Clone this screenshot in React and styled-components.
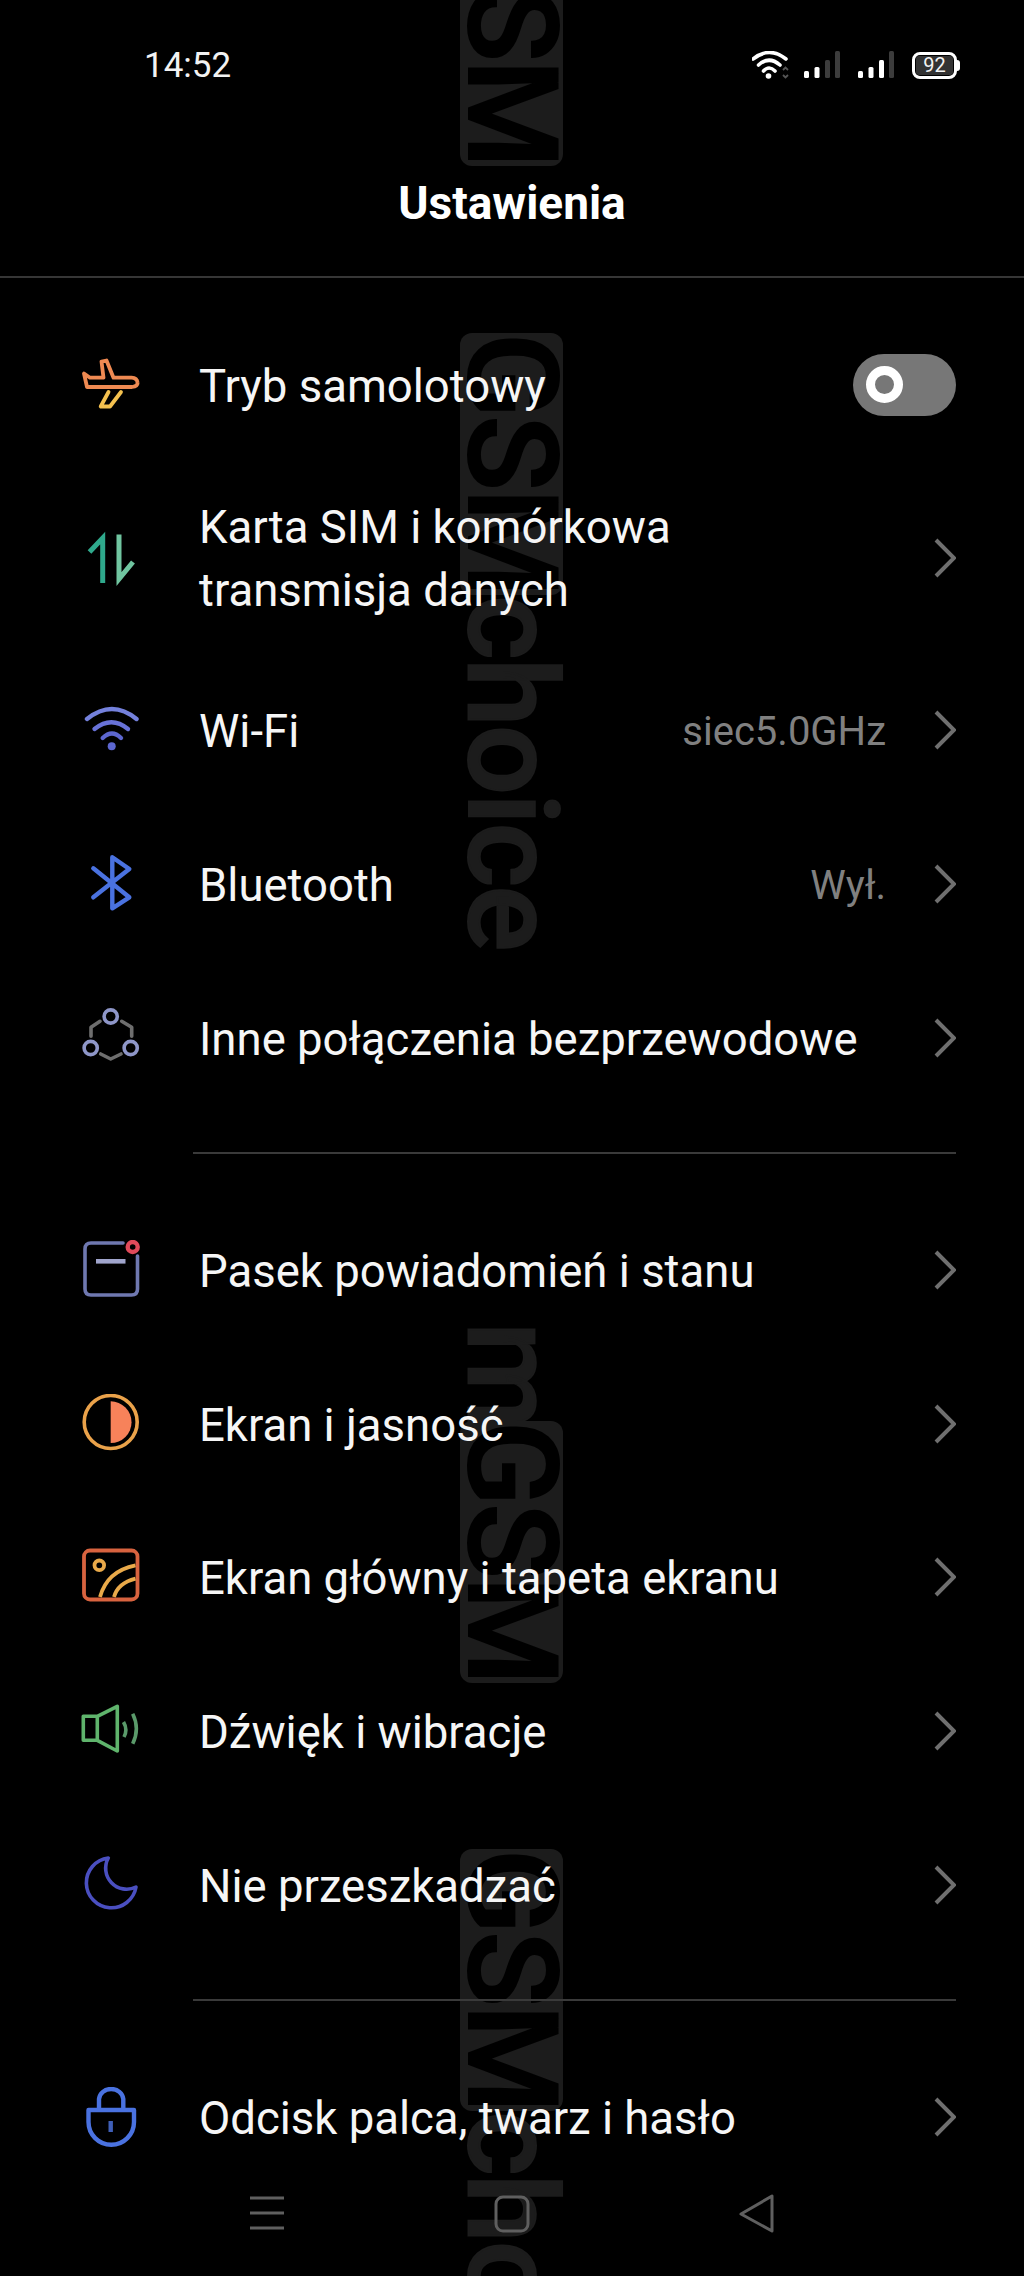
import React from "react";
import styled, { createGlobalStyle } from "styled-components";

const GlobalStyle = createGlobalStyle`
  html, body { margin: 0; padding: 0; background: #000; }
  * { box-sizing: border-box; }
`;

const Page = styled.div`
  position: relative;
  width: 1024px;
  height: 2276px;
  overflow: hidden;
  background: #000;
  color: #f6f6f6;
  font-family: Roboto, "Liberation Sans", sans-serif;
`;

/* watermark sits under everything */
const WatermarkGroup = styled.div`
  position: absolute;
  left: 460px;
  top: ${(p) => p.$top}px;
  width: 103px;
  display: flex;
  flex-direction: row;
  align-items: stretch;
  font-size: 124px;
  font-weight: 500;
  letter-spacing: -2px;
  line-height: 103px;
  writing-mode: vertical-rl;
  white-space: nowrap;
`;

const WatermarkPlate = styled.div`
  width: 103px;
  height: 262px;
  display: flex;
  justify-content: center;
  border-radius: 12px;
  background: #1c1c1c;
  color: #000;
  -webkit-text-stroke: 2px #000;
`;

const WatermarkWord = styled.div`
  width: 103px;
  height: ${(p) => (p.$length ? `${p.$length}px` : "auto")};
  color: #1c1c1c;
  -webkit-text-stroke: 2px #1c1c1c;
`;

const Content = styled.div`
  position: relative;
`;

const StatusBar = styled.div`
  height: 130px;
  padding: 0 65px 0 144px;
  display: flex;
  align-items: center;
  justify-content: space-between;
`;

const Time = styled.span`
  font-size: 35px;
  color: #f2f2f2;
`;

const StatusIcons = styled.div`
  display: flex;
  align-items: center;
  gap: 18px;
`;

const StatusWifi = styled.svg`
  width: 38px;
  height: 28px;
  margin-right: -4px;
`;

const StatusSignal = styled.svg`
  width: 36px;
  height: 28px;
`;

const Battery = styled.div`
  position: relative;
  width: 45px;
  height: 27px;
  margin-right: 2px;
  padding: 1px;
  border: 3px solid #fff;
  border-radius: 8px;
  &::after {
    content: "";
    position: absolute;
    right: -6px;
    top: 5px;
    width: 3px;
    height: 11px;
    border-radius: 0 3px 3px 0;
    background: #fff;
  }
`;

const BatteryLevel = styled.div`
  height: 100%;
  border-radius: 3px;
  background: #333;
  color: #f4f4f4;
  font-size: 20px;
  line-height: 19px;
  text-align: center;
`;

const Header = styled.h1`
  margin: 0;
  height: 148px;
  display: flex;
  align-items: center;
  justify-content: center;
  border-bottom: 2px solid #363636;
  font-size: 46px;
  font-weight: 700;
  color: #fff;
`;

const List = styled.div`
  padding-top: 30px;
`;

const Row = styled.div`
  min-height: 153.6px;
  padding: 31.5px 68px 31.5px 80px;
  display: flex;
  align-items: center;
`;

const IconBox = styled.svg`
  flex: none;
  width: 60px;
  height: 60px;
  margin-right: 59px;
  fill: none;
  stroke-linecap: round;
  stroke-linejoin: round;
`;

const Label = styled.div`
  flex: 1;
  padding-top: 3px;
  font-size: 45.5px;
  line-height: 63px;
  white-space: pre-line;
  color: #f6f6f6;
`;

const Value = styled.span`
  margin-right: 48px;
  padding-top: 3px;
  font-size: 40px;
  color: #808080;
`;

const Chevron = styled.svg`
  flex: none;
  width: 22px;
  height: 40px;
  fill: none;
  stroke: #6f6f6f;
  stroke-width: 4;
`;

const Toggle = styled.div`
  width: 103px;
  height: 62px;
  padding: 12px 0 0 13px;
  border-radius: 31px;
  background: #777;
`;

const ToggleKnob = styled.div`
  width: 37px;
  height: 37px;
  border: 9px solid #fff;
  border-radius: 50%;
`;

const SectionLine = styled.div`
  height: 2px;
  margin: 38px 68px 39px 193px;
  background: #3a3a3a;
`;

const NavBar = styled.div`
  height: 79px;
  padding: 0 145px;
  display: grid;
  grid-template-columns: repeat(3, 1fr);
  justify-items: center;
`;

const NavIcon = styled.svg`
  width: 40px;
  height: 40px;
  fill: none;
  stroke: #5f5f5f;
  stroke-width: 3;
  stroke-linecap: round;
  stroke-linejoin: round;
`;

const PlaneIcon = () => (
  <IconBox viewBox="0 0 60 60" strokeWidth="3.8">
    <path stroke="#ef8a52" d="M4 18.5 L7 32 H52 Q58 31 57.5 27.5 Q57 23 51.5 22.7 H33.5 L26.5 5.5 L21.5 6.5 L23.5 22.7 H10 Z" />
    <path stroke="#f4c14f" d="M28.5 37 L20.7 51.5 H30 L41 37" />
  </IconBox>
);

const DataIcon = () => (
  <IconBox viewBox="0 0 60 60" strokeWidth="5" style={{ strokeLinecap: "butt", strokeLinejoin: "miter" }}>
    <path stroke="#2fa98c" d="M22.7 55 V10 L9.5 24" />
    <path stroke="#70c5a0" d="M39 6.5 V51 L53 34" />
  </IconBox>
);

const WifiIcon = () => (
  <IconBox viewBox="0 0 60 60" strokeWidth="4.4">
    <path stroke="#7481dc" d="M7 19 Q32 -1 56.5 19" />
    <path stroke="#6872d8" d="M14.5 29 Q31.5 15.5 48 29" />
    <path stroke="#5d67d0" d="M22.7 38 Q32 29 41 38" />
    <circle cx="31.7" cy="46.3" r="4" fill="#5d67d0" stroke="none" />
  </IconBox>
);

const BluetoothIcon = () => (
  <IconBox viewBox="0 0 60 60" strokeWidth="4.4" stroke="#4a72e0">
    <path d="M13.3 14.3 L49.3 43.3 L32.3 54.3 V3.3 L49.3 15 L13.3 43.3" />
  </IconBox>
);

const WirelessIcon = () => (
  <IconBox viewBox="0 0 60 60" strokeWidth="3.6">
    <path stroke="#6e6e6e" d="M20 13.3 L11 19.3 V28.3 M41.7 13.3 L51.7 19.3 V28.3 M20.7 46 L30.7 51 L41 46" />
    <g stroke="#8e96c8">
      <circle cx="30.7" cy="8.5" r="6.6" />
      <circle cx="10.7" cy="40" r="6.6" />
      <circle cx="50.7" cy="40" r="6.6" />
    </g>
  </IconBox>
);

const NoticeIcon = () => (
  <IconBox viewBox="0 0 60 60" strokeWidth="3.6">
    <path stroke="#6f78b0" d="M43 3 H11 Q5 3 5 9 V49 Q5 55 11 55 H51.5 Q57.5 55 57.5 49 V16" />
    <path stroke="#a0a5cc" strokeWidth="4.6" strokeLinecap="butt" d="M16 21.3 H45.5" />
    <circle cx="52.7" cy="7" r="5" stroke="#e04a5a" strokeWidth="4.4" />
  </IconBox>
);

const DisplayIcon = () => (
  <IconBox viewBox="0 0 60 60" strokeWidth="3.6">
    <circle cx="30.7" cy="28" r="26.5" stroke="#eaa24a" />
    <path fill="#f7825a" d="M30.7 7.3 A20.7 20.7 0 0 1 30.7 49 Z" />
  </IconBox>
);

const WallpaperIcon = () => (
  <IconBox viewBox="0 0 60 60" strokeWidth="3.8">
    <rect x="4" y="3.5" width="53.5" height="49" rx="6" stroke="#d8633f" />
    <circle cx="19.3" cy="18.3" r="4.8" stroke="#eaaa4a" />
    <path stroke="#eaaa4a" strokeLinecap="butt" d="M20 50 Q27 24 55.5 18.3 M34 50 Q38 36 55.5 31.7" />
  </IconBox>
);

const SoundIcon = () => (
  <IconBox viewBox="0 0 60 60" strokeWidth="3.6">
    <path stroke="#5fb46c" d="M3.3 15.3 H17.3 L37.3 5.3 V50 L17.3 39.3 H3.3 Z M17.3 15.3 V39.3" />
    <path stroke="#5a9a6a" strokeLinecap="butt" d="M43.5 21 Q48 28.5 44 36 M52.7 12.7 Q60 27.7 52.7 42.7" />
  </IconBox>
);

const MoonIcon = () => (
  <IconBox viewBox="0 0 60 60" strokeWidth="3.6" stroke="#4a4fc0">
    <path d="M28.3 3 A25 25 0 1 0 56 32 A21 21 0 0 1 28.3 3 Z" />
  </IconBox>
);

const LockIcon = () => (
  <IconBox viewBox="0 0 60 60" strokeWidth="4.4" stroke="#4a72e0">
    <path d="M19 22 V12 A12.2 11 0 0 1 43.3 12 V22" />
    <path d="M8.5 23 H54 V35 A22.7 22.7 0 0 1 8.5 35 Z" />
    <path stroke="#3f5fb8" strokeLinecap="butt" d="M30.7 34 V45" />
  </IconBox>
);

const firstRows = [
  { id: "plane", icon: PlaneIcon, label: "Tryb samolotowy", toggle: true },
  { id: "sim", icon: DataIcon, label: "Karta SIM i komórkowa\ntransmisja danych" },
  { id: "wifi", icon: WifiIcon, label: "Wi-Fi", value: "siec5.0GHz" },
  { id: "bt", icon: BluetoothIcon, label: "Bluetooth", value: "Wył." },
  { id: "other", icon: WirelessIcon, label: "Inne połączenia bezprzewodowe" },
];

const secondRows = [
  { id: "notice", icon: NoticeIcon, label: "Pasek powiadomień i stanu" },
  { id: "display", icon: DisplayIcon, label: "Ekran i jasność" },
  { id: "home", icon: WallpaperIcon, label: "Ekran główny i tapeta ekranu" },
  { id: "sound", icon: SoundIcon, label: "Dźwięk i wibracje" },
  { id: "dnd", icon: MoonIcon, label: "Nie przeszkadzać" },
];

const thirdRows = [
  { id: "lock", icon: LockIcon, label: "Odcisk palca, twarz i hasło" },
];

function SettingsRow({ item }) {
  const Icon = item.icon;
  return (
    <Row>
      <Icon />
      <Label>{item.label}</Label>
      {item.value && <Value>{item.value}</Value>}
      {item.toggle ? (
        <Toggle>
          <ToggleKnob />
        </Toggle>
      ) : (
        <Chevron viewBox="0 0 22 40">
          <path d="M2 2 L20 20 L2 38" />
        </Chevron>
      )}
    </Row>
  );
}

function Signal({ lit }) {
  const bars = [
    { x: 0, h: 7 },
    { x: 10.5, h: 11 },
    { x: 21, h: 18 },
    { x: 31, h: 27 },
  ];
  return (
    <StatusSignal viewBox="0 0 36 28">
      {bars.map((b, i) => (
        <rect key={b.x} x={b.x} y={27 - b.h} width="5" height={b.h} rx="1.5" fill={i < lit ? "#fff" : "#3c3c3c"} />
      ))}
    </StatusSignal>
  );
}

export default function App() {
  return (
    <Page>
      <GlobalStyle />
      <WatermarkGroup $top={-96}>
        <WatermarkPlate>GSM</WatermarkPlate>
      </WatermarkGroup>
      <WatermarkGroup $top={333}>
        <WatermarkPlate>GSM</WatermarkPlate>
        <WatermarkWord>choice</WatermarkWord>
      </WatermarkGroup>
      <WatermarkGroup $top={1322}>
        <WatermarkWord $length={99}>m</WatermarkWord>
        <WatermarkPlate>GSM</WatermarkPlate>
      </WatermarkGroup>
      <WatermarkGroup $top={1849}>
        <WatermarkPlate>GSM</WatermarkPlate>
        <WatermarkWord>choice</WatermarkWord>
      </WatermarkGroup>

      <Content>
        <StatusBar>
          <Time>14:52</Time>
          <StatusIcons>
            <StatusWifi viewBox="0 0 38 28" fill="none">
              <g stroke="#fff" strokeWidth="3.6" strokeLinecap="round">
                <path d="M1 8 Q17.5 -5 34 8" />
                <path d="M6.5 14 Q17 4.5 28 14" />
                <path d="M11.5 20 Q17 14 23 20" />
              </g>
              <circle cx="16.5" cy="25" r="2.8" fill="#fff" />
              <path stroke="#555" strokeWidth="1.8" d="M31 19 L33.5 16.5 L36 19 M31 24 L33.5 26.5 L36 24" />
            </StatusWifi>
            <Signal lit={2} />
            <Signal lit={3} />
            <Battery>
              <BatteryLevel>92</BatteryLevel>
            </Battery>
          </StatusIcons>
        </StatusBar>
        <Header>Ustawienia</Header>

        <List>
          {firstRows.map((item) => (
            <SettingsRow key={item.id} item={item} />
          ))}
          <SectionLine />
          {secondRows.map((item) => (
            <SettingsRow key={item.id} item={item} />
          ))}
          <SectionLine />
          {thirdRows.map((item) => (
            <SettingsRow key={item.id} item={item} />
          ))}
        </List>

        <NavBar>
          <NavIcon viewBox="0 0 40 40">
            <path strokeLinecap="butt" d="M3 4 H37 M3 19 H37 M3 34 H37" />
          </NavIcon>
          <NavIcon viewBox="0 0 40 40">
            <rect x="4" y="3" width="32" height="34" rx="7" />
          </NavIcon>
          <NavIcon viewBox="0 0 40 40">
            <path d="M35 2 V37 L4 20 Z" />
          </NavIcon>
        </NavBar>
      </Content>
    </Page>
  );
}
